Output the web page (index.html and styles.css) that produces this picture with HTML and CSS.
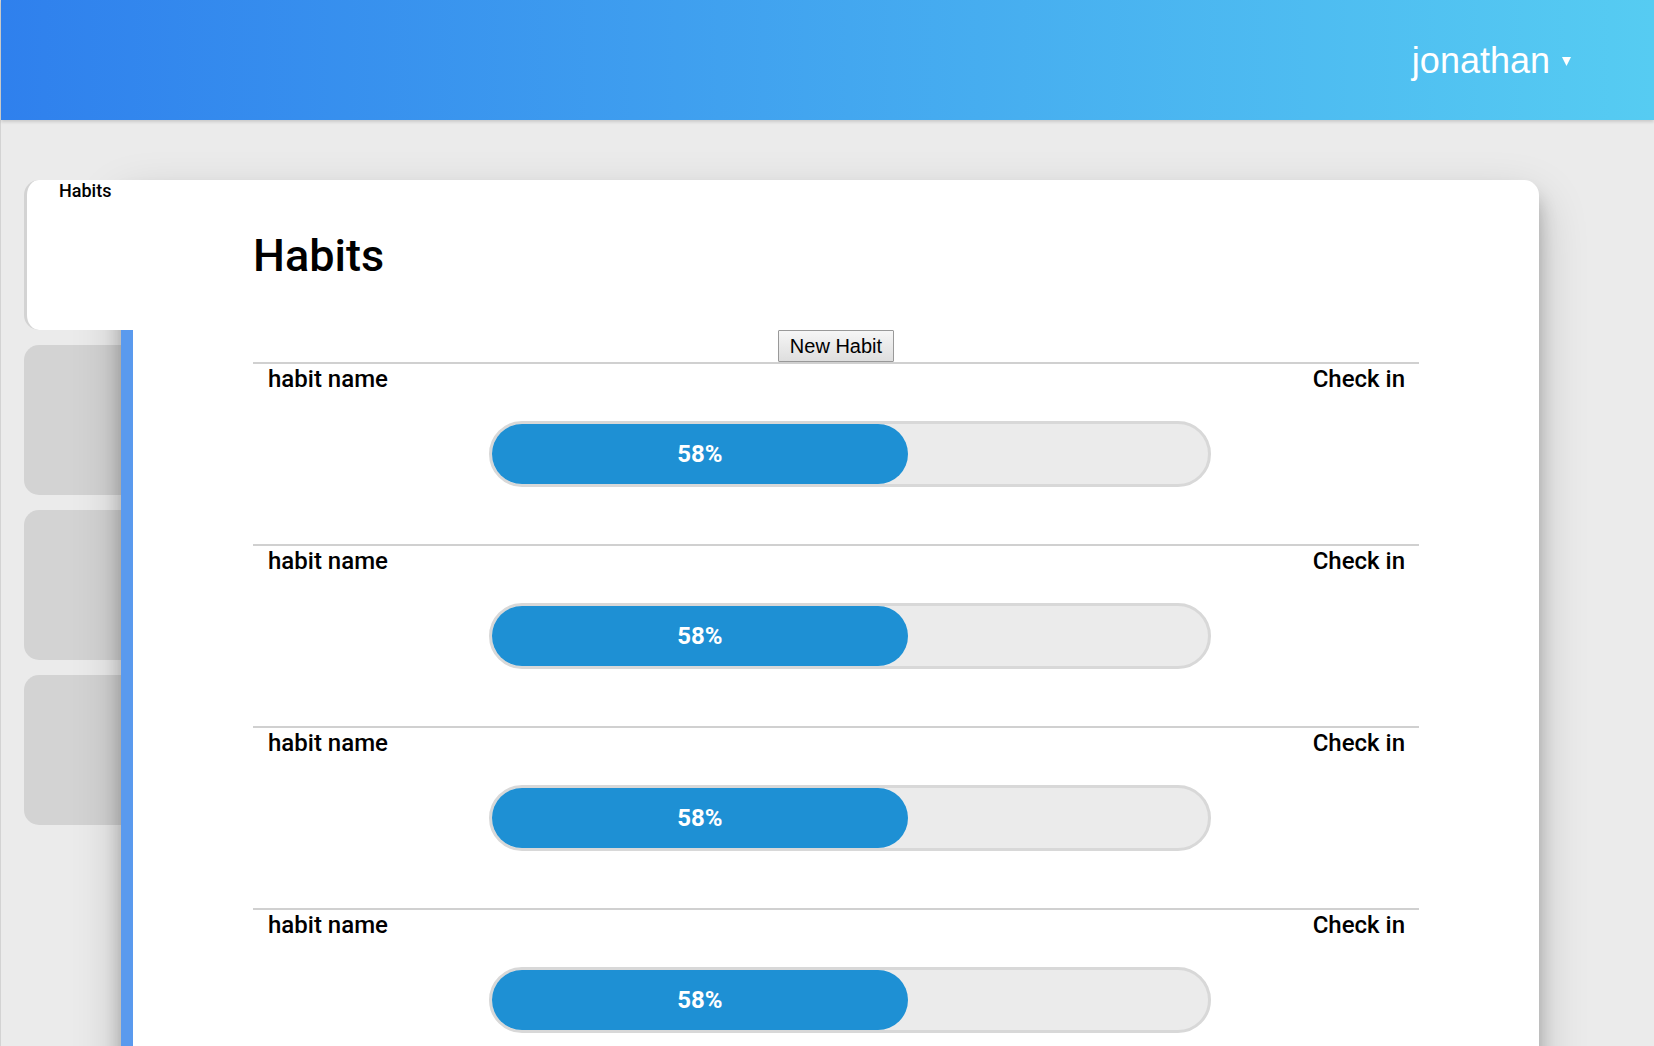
FILE: index.html
```
<!DOCTYPE html>
<html lang="en">
<head>
<meta charset="utf-8">
<meta name="viewport" content="width=device-width, initial-scale=1">
<title>Habits</title>
<link rel="stylesheet" href="styles.css">
</head>
<body>
<div class="app">
  <header class="topbar">
    <button class="user-menu" type="button" aria-haspopup="true">
      jonathan
      <svg class="caret" viewBox="0 0 9 9" aria-hidden="true"><path d="M0 0h9L4.500 9z" fill="currentColor"/></svg>
    </button>
  </header>
  <div class="layout">
    <nav class="tabs" aria-label="Sections">
      <a class="tab tab-active" href="#habits">Habits</a>
      <a class="tab" href="#second" aria-label="Second section"></a>
      <a class="tab" href="#third" aria-label="Third section"></a>
      <a class="tab" href="#fourth" aria-label="Fourth section"></a>
    </nav>
    <main class="panel" id="habits">
      <h1 class="title">Habits</h1>
      <button class="new-habit" type="button">New Habit</button>
      <ul class="habits">
        <li class="habit">
          <span class="habit-name">habit name</span>
          <div class="bar"><div class="bar-fill" style="width: 58%">58%</div></div>
          <a class="check-in" href="#check-in">Check in</a>
        </li>
        <li class="habit">
          <span class="habit-name">habit name</span>
          <div class="bar"><div class="bar-fill" style="width: 58%">58%</div></div>
          <a class="check-in" href="#check-in">Check in</a>
        </li>
        <li class="habit">
          <span class="habit-name">habit name</span>
          <div class="bar"><div class="bar-fill" style="width: 58%">58%</div></div>
          <a class="check-in" href="#check-in">Check in</a>
        </li>
        <li class="habit">
          <span class="habit-name">habit name</span>
          <div class="bar"><div class="bar-fill" style="width: 58%">58%</div></div>
          <a class="check-in" href="#check-in">Check in</a>
        </li>
      </ul>
    </main>
  </div>
</div>
</body>
</html>
```
FILE: styles.css
```
* {
  box-sizing: border-box;
}

body {
  margin: 0;
  background: #ebebeb;
  color: #000;
  font: 500 24px/30px Roboto, sans-serif;
}

a {
  color: inherit;
  text-decoration: none;
}

.app {
  display: flex;
  flex-direction: column;
  min-height: 100vh;
  border-left: 1px solid #d3d3d3;
}

.topbar {
  display: flex;
  align-items: center;
  justify-content: flex-end;
  height: 120px;
  padding: 2px 83px 0 0;
  background: linear-gradient(90deg, #2f80ed, #56ccf2);
  box-shadow: 0 2px 3px rgba(0, 0, 0, 0.14);
}

.user-menu {
  display: flex;
  align-items: center;
  gap: 12px;
  padding: 0;
  border: 0;
  background: none;
  color: #fff;
  font: 36px/42px "Liberation Sans", Arial, sans-serif;
}

.caret {
  width: 9px;
  height: 9px;
}

.layout {
  display: flex;
  flex: 1;
  padding: 60px 115px 0 23px;
}

.tabs {
  display: flex;
  flex-direction: column;
  flex: 0 0 97px;
  gap: 15px;
}

.tab {
  height: 150px;
  border-radius: 15px 0 0 15px;
  background: #d3d3d3;
  font-size: 18px;
  line-height: 22px;
}

.tab-active {
  position: relative;
  z-index: 2;
  margin-right: -12px;
  padding-left: 32px;
  border-left: 3px solid #d3d3d3;
  background: #fff;
}

.panel {
  position: relative;
  z-index: 1;
  display: flex;
  flex-direction: column;
  flex: 1;
  padding: 46px 120px 0;
  border-left: 12px solid #5a9aee;
  border-top-right-radius: 15px;
  background: #fff;
  box-shadow: 0 20px 50px rgba(0, 0, 0, 0.2), 0 15px 18px rgba(0, 0, 0, 0.22);
}

.title {
  margin: 0 0 44px;
  font-size: 45px;
  font-weight: 500;
  line-height: 60px;
}

.new-habit {
  align-self: center;
  height: 32px;
  padding: 0 11px;
  border: 1px solid #999;
  border-radius: 1px;
  background: linear-gradient(#f6f6f6, #dedede);
  color: #000;
  font: 20px/28px "Liberation Sans", Arial, sans-serif;
}

.habits {
  margin: 0;
  padding: 0;
  list-style: none;
}

.habit {
  display: flex;
  align-items: flex-start;
  justify-content: space-between;
  padding: 0 14px 0 15px;
  border-top: 2px solid #d0d0d0;
}

.bar {
  box-sizing: content-box;
  width: 63%;
  height: 60px;
  margin: 57px 0;
  border: 3px solid #d8d8d8;
  border-radius: 33px;
  background: #ebebeb;
}

.bar-fill {
  height: 100%;
  border-radius: 30px;
  background: #1e90d4;
  color: #fff;
  font-weight: 700;
  line-height: 60px;
  text-align: center;
}
```
